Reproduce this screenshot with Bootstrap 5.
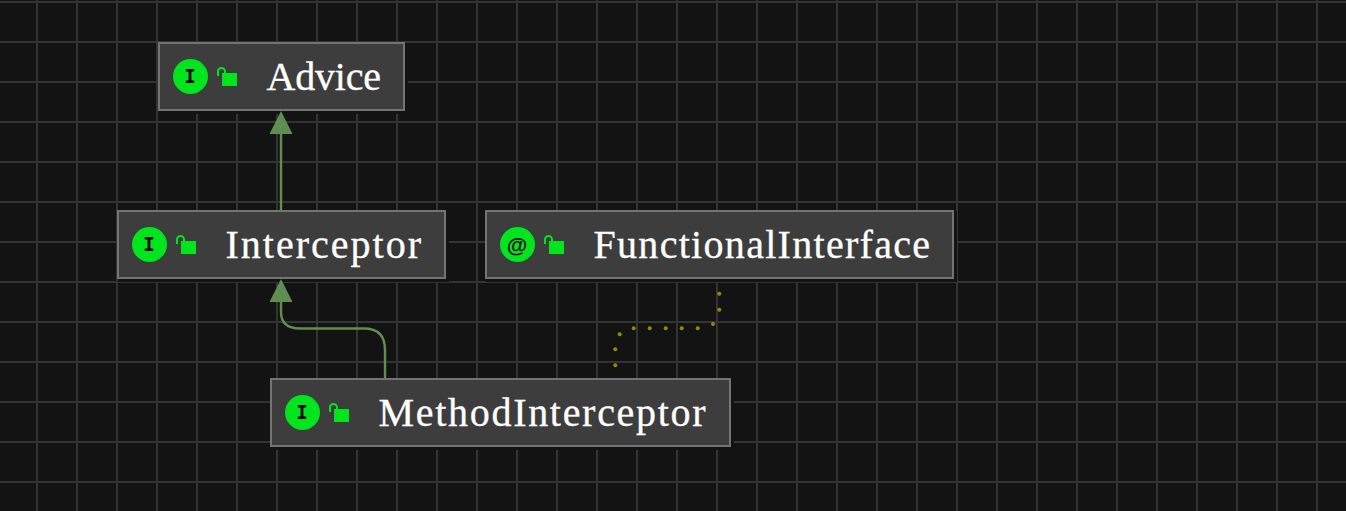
<!DOCTYPE html>
<html lang="en"><head><meta charset="utf-8"><title>Diagram</title>
<link rel="stylesheet" href="https://cdn.jsdelivr.net/npm/bootstrap@5.3.0/dist/css/bootstrap.min.css">
<style>
html,body{height:100%;margin:0;background:#131313;overflow:hidden}
.canvas{position:relative;width:1346px;height:511px;background-color:#131313;
background-image:linear-gradient(to right,#343434 2px,transparent 2px),linear-gradient(to bottom,#343434 2px,transparent 2px);
background-size:40px 40px;background-position:36px 1px}
.edges{position:absolute;left:0;top:0;width:1346px;height:511px;z-index:2}
.uml{position:absolute;height:69px;background:#3d3d3d;border:2px solid #747474;box-shadow:2px 2px 0 1px #131313;color:#fff;font-family:"Liberation Serif",serif;font-size:40px;line-height:1;white-space:nowrap;padding-left:12.500px;-webkit-text-stroke:.3px #fff}
.uml-a{left:158px;top:42px;width:247px;letter-spacing:-.200px}
.uml-b{left:117px;top:210px;width:329px;letter-spacing:2px}
.uml-c{left:485px;top:210px;width:469px;letter-spacing:1.300px}
.uml-d{left:270px;top:378px;width:461px;letter-spacing:1.700px}
.kind{width:35px;height:35px;border-radius:50%;background:#00e51e;color:#000;font-family:"DejaVu Sans Mono","Liberation Mono",monospace;font-size:19px;font-weight:700;letter-spacing:0;flex:none;-webkit-text-stroke:0}
.kind-at{font-family:"Liberation Sans",sans-serif;font-size:21px;font-weight:700}
.lock{flex:none;margin-left:9.500px}
.nm{margin-left:29.500px}
</style></head><body>
<div class="canvas">
<svg class="edges" viewBox="0 0 1346 511" fill="none">
<path d="M281 210V130" stroke="#5f8f50" stroke-width="2.400"/>
<path d="M281 111l11.500 23h-23z" fill="#5f8f50"/>
<path d="M281 298V312Q281 328.500 300 328.500H364Q385 328.500 385 350V378" stroke="#5f8f50" stroke-width="2.400"/>
<path d="M281 279l11.500 23h-23z" fill="#5f8f50"/>
<g fill="#8f9000"><circle cx="719.300" cy="293.700" r="2"/><circle cx="719.300" cy="309.700" r="2"/><circle cx="713" cy="324" r="2"/><circle cx="697.700" cy="328.300" r="2"/><circle cx="681.700" cy="328.300" r="2"/><circle cx="665.700" cy="328.300" r="2"/><circle cx="649.700" cy="328.300" r="2"/><circle cx="633.700" cy="328.300" r="2"/><circle cx="619.700" cy="334.300" r="2"/><circle cx="615.300" cy="349.300" r="2"/><circle cx="615.300" cy="365.300" r="2"/></g>
</svg>
<div class="uml uml-a d-flex align-items-center"><span class="kind d-flex align-items-center justify-content-center">I</span><svg class="lock" width="20" height="19" viewBox="0 0 20 19"><path d="M1 9V4.500a3.500 3.500 0 0 1 7 0V6" fill="none" stroke="#00e51e" stroke-width="2"/><rect x="5" y="6" width="15" height="13" fill="#00e51e"/></svg><span class="nm">Advice</span></div>
<div class="uml uml-b d-flex align-items-center"><span class="kind d-flex align-items-center justify-content-center">I</span><svg class="lock" width="20" height="19" viewBox="0 0 20 19"><path d="M1 9V4.500a3.500 3.500 0 0 1 7 0V6" fill="none" stroke="#00e51e" stroke-width="2"/><rect x="5" y="6" width="15" height="13" fill="#00e51e"/></svg><span class="nm">Interceptor</span></div>
<div class="uml uml-c d-flex align-items-center"><span class="kind kind-at d-flex align-items-center justify-content-center">@</span><svg class="lock" width="20" height="19" viewBox="0 0 20 19"><path d="M1 9V4.500a3.500 3.500 0 0 1 7 0V6" fill="none" stroke="#00e51e" stroke-width="2"/><rect x="5" y="6" width="15" height="13" fill="#00e51e"/></svg><span class="nm">FunctionalInterface</span></div>
<div class="uml uml-d d-flex align-items-center"><span class="kind d-flex align-items-center justify-content-center">I</span><svg class="lock" width="20" height="19" viewBox="0 0 20 19"><path d="M1 9V4.500a3.500 3.500 0 0 1 7 0V6" fill="none" stroke="#00e51e" stroke-width="2"/><rect x="5" y="6" width="15" height="13" fill="#00e51e"/></svg><span class="nm">MethodInterceptor</span></div>
</div>
<script src="https://cdn.jsdelivr.net/npm/bootstrap@5.3.0/dist/js/bootstrap.bundle.min.js"></script>
</body></html>
